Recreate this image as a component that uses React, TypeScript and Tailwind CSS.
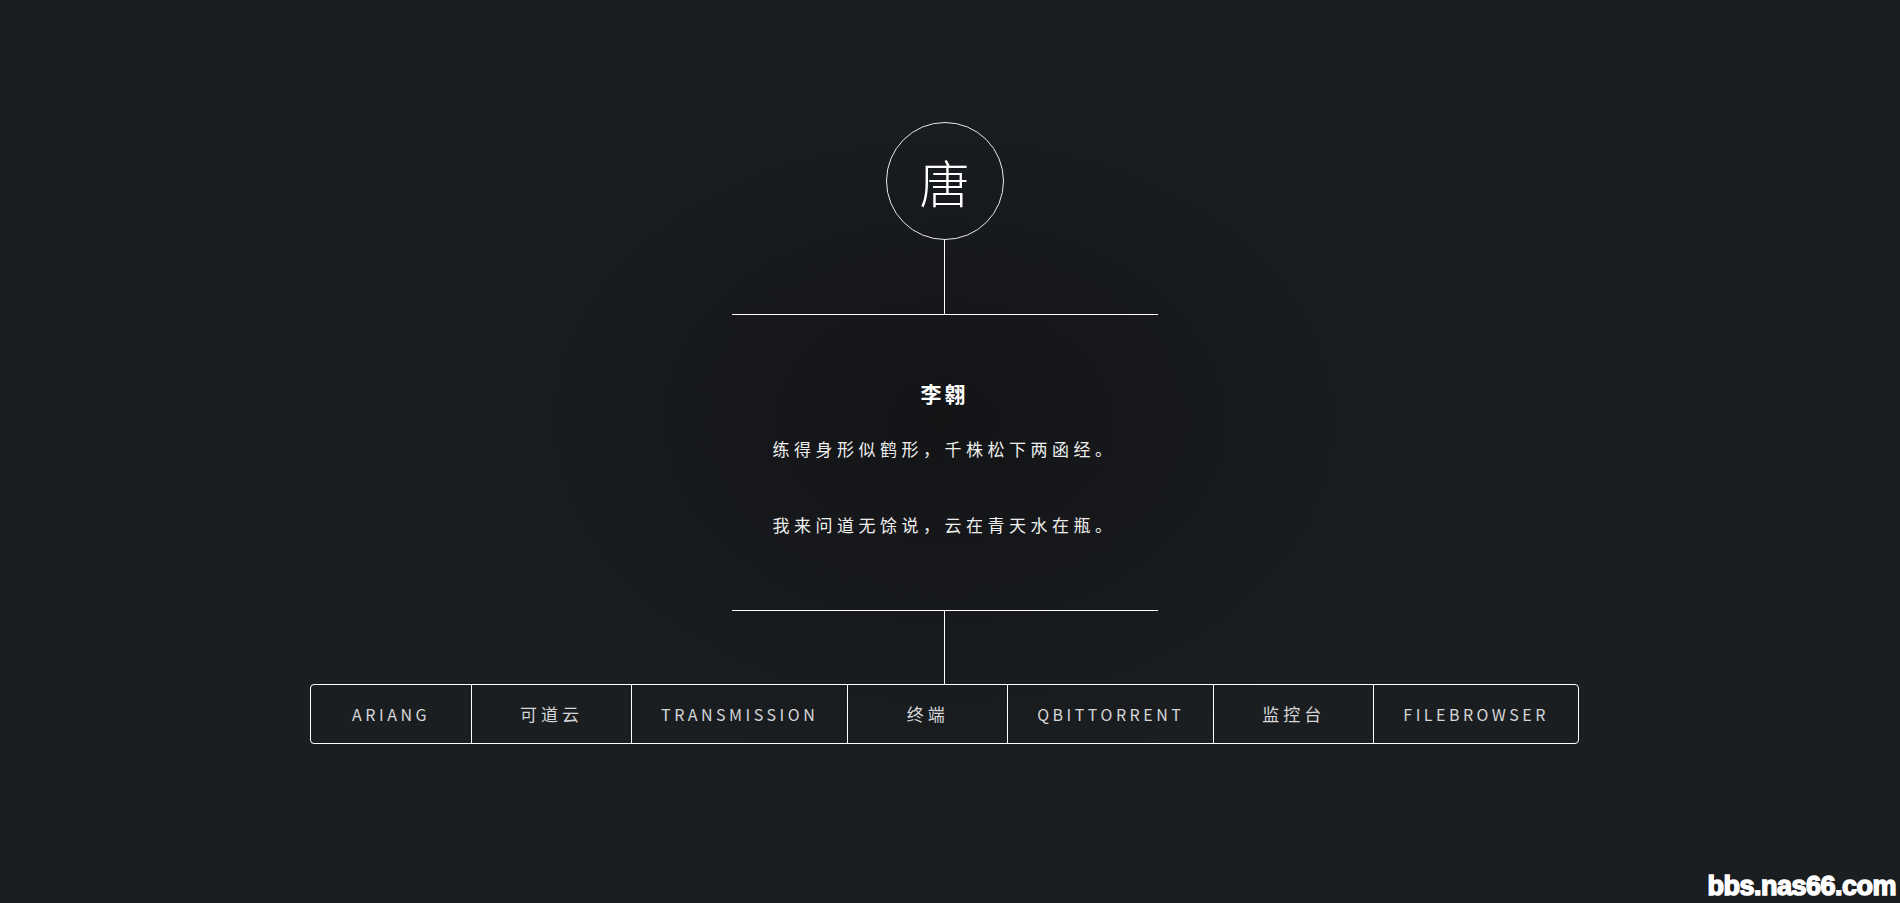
import * as React from "react";

const links = [
  { label: "ARIANG", cn: false },
  { label: "可道云", cn: true },
  { label: "TRANSMISSION", cn: false },
  { label: "终端", cn: true },
  { label: "QBITTORRENT", cn: false },
  { label: "监控台", cn: true },
  { label: "FILEBROWSER", cn: false },
];

const font = "font-['Noto_Sans_CJK_SC','Noto_Sans',sans-serif]";

export default function App() {
  return (
    <div
      className={`relative min-h-screen w-full overflow-hidden bg-[#1b1e21] bg-[radial-gradient(ellipse_500px_360px_at_944px_420px,#121416_0%,#16181b_45%,#1b1e21_100%)] ${font}`}
    >
      <div className="flex flex-col items-center pt-[122px] pr-[11px]">
        {/* avatar */}
        <div className="flex h-[118px] w-[118px] items-center justify-center rounded-full border border-white/90 text-[50px] font-light leading-none text-white">
          唐
        </div>
        <div className="h-[74px] w-px bg-white" />
        <div className="h-px w-[426px] bg-white" />

        <div className="flex flex-col items-center pt-[63px] pb-[70px]">
          <h1 className="text-[21px] leading-[30px] font-bold tracking-[3px] text-white">李翱</h1>
          <p className="mt-[26px] text-[17px] leading-[30px] tracking-[4.5px] text-[#eeeeee]">
            练得身形似鹤形，千株松下两函经。
          </p>
          <p className="mt-[46px] text-[17px] leading-[30px] tracking-[4.5px] text-[#eeeeee]">
            我来问道无馀说，云在青天水在瓶。
          </p>
        </div>

        <div className="h-px w-[426px] bg-white" />
        <div className="h-[73px] w-px bg-white" />

        <nav className="flex h-[60px] rounded-[4px] border border-white">
          {links.map((l, i) => (
            <a
              key={l.label}
              href="#"
              className={`flex min-w-[160px] items-center justify-center px-[29px] text-[#d4d6d8] ${
                l.cn ? "text-[17px] tracking-[4px]" : "text-[16px] tracking-[3.5px]"
              } ${i > 0 ? "border-l border-white" : ""}`}
            >
              {l.label}
            </a>
          ))}
        </nav>
      </div>

      <div className="absolute right-[4px] bottom-[3px] font-['Liberation_Sans',Arial,sans-serif] text-[27px] leading-none font-bold tracking-[-0.5px] text-white [-webkit-text-stroke:1.5px_#ffffff] [text-shadow:0_0_2px_#000]">
        bbs.nas66.com
      </div>
    </div>
  );
}
